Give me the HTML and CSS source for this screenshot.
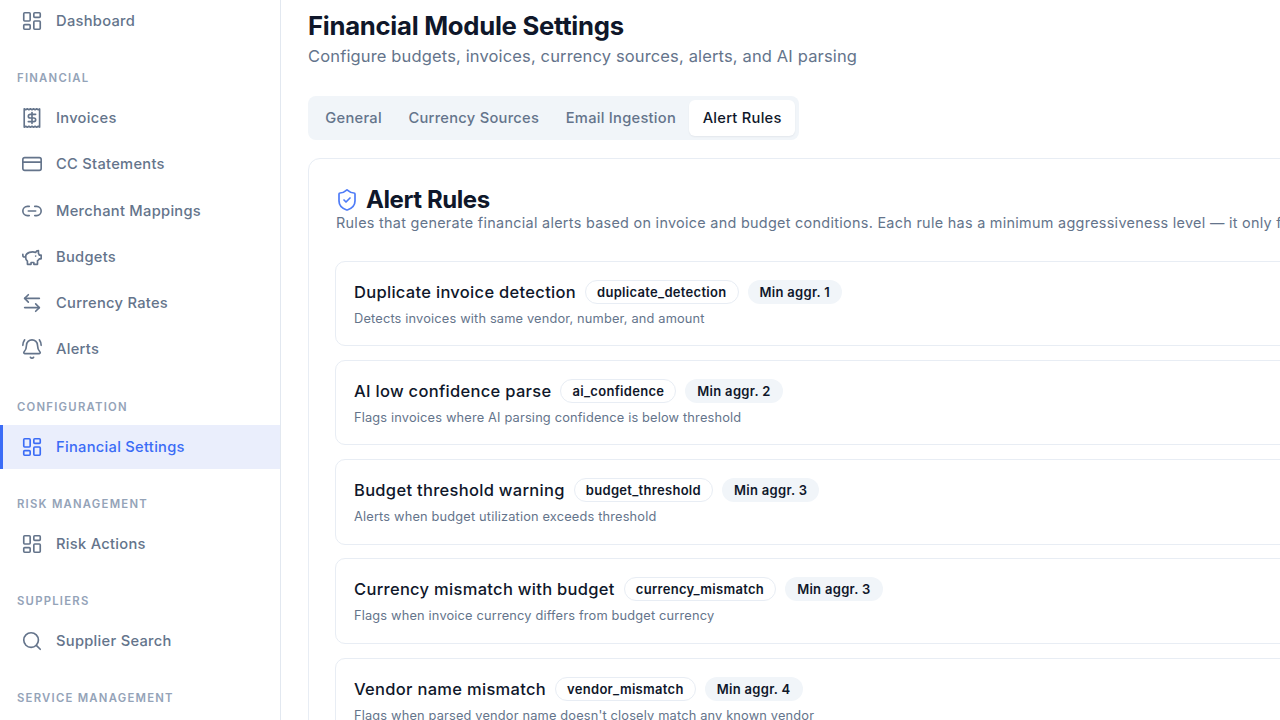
FILE: index.html
```html
<!DOCTYPE html>
<html lang="en">
<head>
<meta charset="utf-8">
<title>Financial Module Settings</title>
<link rel="stylesheet" href="styles.css">
</head>
<body>
<svg class="defs" width="0" height="0" aria-hidden="true">
  <symbol id="i-dash" viewBox="0 0 24 24"><rect x="3" y="3" width="7" height="9" rx="1"/><rect x="14" y="3" width="7" height="5" rx="1"/><rect x="14" y="12" width="7" height="9" rx="1"/><rect x="3" y="16" width="7" height="5" rx="1"/></symbol>
  <symbol id="i-invoice" viewBox="0 0 24 24"><path d="M3.5 2l1.7 1 1.7-1 1.7 1 1.7-1 1.7 1 1.7-1 1.7 1 1.7-1 1.7 1 1.5-1v20l-1.5-1-1.7 1-1.7-1-1.7 1-1.7-1-1.7 1-1.7-1-1.7 1-1.7-1-1.7 1V2z"/><path d="M16 8h-6a2 2 0 1 0 0 4h4a2 2 0 1 1 0 4H8"/><path d="M12 18v-12"/></symbol>
  <symbol id="i-card" viewBox="0 0 24 24"><rect x="2" y="5" width="20" height="14" rx="2"/><line x1="2" y1="10" x2="22" y2="10"/></symbol>
  <symbol id="i-link" viewBox="0 0 24 24"><path d="M9 17H7A5 5 0 0 1 7 7h2"/><path d="M15 7h2a5 5 0 1 1 0 10h-2"/><line x1="8" y1="12" x2="16" y2="12"/></symbol>
  <symbol id="i-piggy" viewBox="0 0 24 24"><path d="M19 5c-1.5 0-2.8 1.4-3 2-3.5-1.5-11-.3-11 5 0 1.8 0 3 2 4.5V20h4v-2h3v2h4v-4c1-.5 1.7-1 2-2h2v-4h-2c0-1-.5-1.5-1-2V5z"/><path d="M2 9v1c0 1.1.9 2 2 2h1"/><path d="M16 11h.01"/></symbol>
  <symbol id="i-swap" viewBox="0 0 24 24"><path d="M8 3 4 7l4 4"/><path d="M4 7h16"/><path d="m16 21 4-4-4-4"/><path d="M20 17H4"/></symbol>
  <symbol id="i-bell" viewBox="0 0 24 24"><path d="M10.268 21a2 2 0 0 0 3.464 0"/><path d="M22 8c0-2.3-.8-4.3-2-6"/><path d="M3.262 15.326A1 1 0 0 0 4 17h16a1 1 0 0 0 .74-1.673C19.41 13.956 18 12.499 18 8A6 6 0 0 0 6 8c0 4.499-1.411 5.956-2.738 7.326"/><path d="M4 2C2.8 3.7 2 5.7 2 8"/></symbol>
  <symbol id="i-search" viewBox="0 0 24 24"><circle cx="11" cy="11" r="8"/><path d="m21 21-4.3-4.3"/></symbol>
  <symbol id="i-shield" viewBox="0 0 24 24"><path d="M20 13c0 5-3.5 7.5-7.66 8.95a1 1 0 0 1-.67-.01C7.5 20.5 4 18 4 13V6a1 1 0 0 1 1-1c2 0 4.5-1.2 6.24-2.72a1.17 1.17 0 0 1 1.52 0C14.51 3.81 17 5 19 5a1 1 0 0 1 1 1z"/><path d="m9 12 2 2 4-4"/></symbol>
</svg>
<div class="app">
  <aside class="sidebar">
    <a class="nav-item"><svg class="icon"><use href="#i-dash"/></svg>Dashboard</a>
    <div class="group-label">FINANCIAL</div>
    <a class="nav-item"><svg class="icon"><use href="#i-invoice"/></svg>Invoices</a>
    <a class="nav-item"><svg class="icon"><use href="#i-card"/></svg>CC Statements</a>
    <a class="nav-item"><svg class="icon"><use href="#i-link"/></svg>Merchant Mappings</a>
    <a class="nav-item"><svg class="icon"><use href="#i-piggy"/></svg>Budgets</a>
    <a class="nav-item"><svg class="icon"><use href="#i-swap"/></svg>Currency Rates</a>
    <a class="nav-item"><svg class="icon"><use href="#i-bell"/></svg>Alerts</a>
    <div class="group-label">CONFIGURATION</div>
    <a class="nav-item active"><svg class="icon"><use href="#i-dash"/></svg>Financial Settings</a>
    <div class="group-label">RISK MANAGEMENT</div>
    <a class="nav-item"><svg class="icon"><use href="#i-dash"/></svg>Risk Actions</a>
    <div class="group-label">SUPPLIERS</div>
    <a class="nav-item"><svg class="icon"><use href="#i-search"/></svg>Supplier Search</a>
    <div class="group-label">SERVICE MANAGEMENT</div>
  </aside>
  <main class="main">
    <h1 class="title">Financial Module Settings</h1>
    <p class="subtitle">Configure budgets, invoices, currency sources, alerts, and AI parsing</p>
    <div class="tabs">
      <span class="tab">General</span>
      <span class="tab">Currency Sources</span>
      <span class="tab">Email Ingestion</span>
      <span class="tab selected">Alert Rules</span>
    </div>
    <section class="card">
      <h2 class="card-title"><svg class="shield"><use href="#i-shield"/></svg>Alert Rules</h2>
      <p class="card-desc">Rules that generate financial alerts based on invoice and budget conditions. Each rule has a minimum aggressiveness level — it only fires when the aggressiveness setting is high enough.</p>
      <div class="rule">
        <div class="rule-head"><span class="rule-name">Duplicate invoice detection</span><span class="code">duplicate_detection</span><span class="aggr">Min aggr. 1</span></div>
        <p class="rule-desc">Detects invoices with same vendor, number, and amount</p>
      </div>
      <div class="rule">
        <div class="rule-head"><span class="rule-name">AI low confidence parse</span><span class="code">ai_confidence</span><span class="aggr">Min aggr. 2</span></div>
        <p class="rule-desc">Flags invoices where AI parsing confidence is below threshold</p>
      </div>
      <div class="rule">
        <div class="rule-head"><span class="rule-name">Budget threshold warning</span><span class="code">budget_threshold</span><span class="aggr">Min aggr. 3</span></div>
        <p class="rule-desc">Alerts when budget utilization exceeds threshold</p>
      </div>
      <div class="rule">
        <div class="rule-head"><span class="rule-name">Currency mismatch with budget</span><span class="code">currency_mismatch</span><span class="aggr">Min aggr. 3</span></div>
        <p class="rule-desc">Flags when invoice currency differs from budget currency</p>
      </div>
      <div class="rule">
        <div class="rule-head"><span class="rule-name">Vendor name mismatch</span><span class="code">vendor_mismatch</span><span class="aggr">Min aggr. 4</span></div>
        <p class="rule-desc">Flags when parsed vendor name doesn't closely match any known vendor</p>
      </div>
    </section>
  </main>
</div>
</body>
</html>
```
FILE: styles.css
```css
* { box-sizing: border-box; }
html, body { margin: 0; height: 100%; overflow: hidden; background: #fff; }
body { font-family: Inter, "Liberation Sans", sans-serif; color: #0f172a; }
.defs { position: absolute; }
.app { display: flex; height: 720px; overflow: hidden; }

.sidebar { flex: 0 0 281px; height: 720px; overflow: hidden; border-right: 1px solid #e2e8f0; background: #fff; }
.nav-item { display: flex; align-items: center; gap: 13px; height: 44px; margin-bottom: 2.25px; padding-left: 21px; font-size: 14.7px; font-weight: 500; letter-spacing: 0.28px; color: #64748b; white-space: nowrap; }
.nav-item:first-child { margin-top: -1px; }
.nav-item.active { background: #eaeefc; color: #3b6cf6; box-shadow: inset 3px 0 0 #3b6cf6; }
.icon { width: 22px; height: 22px; flex: none; fill: none; stroke: currentColor; stroke-width: 1.8; stroke-linecap: round; stroke-linejoin: round; }
.group-label { padding-left: 17px; margin-top: 27.2px; height: 16px; line-height: 16px; margin-bottom: 10px; font-size: 11.3px; font-weight: 600; letter-spacing: 1.25px; color: #94a3b8; white-space: nowrap; }

.main { flex: 1; min-width: 0; overflow: hidden; padding: 10px 0 0 27px; }
.title { margin: 0; font-size: 25.7px; line-height: 32px; font-weight: 700; letter-spacing: -0.28px; color: #0f172a; white-space: nowrap; }
.subtitle { margin: 2px 0 0; font-size: 16.5px; line-height: 24px; letter-spacing: 0.145px; color: #64748b; white-space: nowrap; }
.tabs { display: inline-flex; align-items: center; margin-top: 28px; height: 44px; padding: 4px; background: #f1f5f9; border-radius: 8px; vertical-align: top; }
.tab { padding: 0 13.3px; height: 36px; line-height: 36px; font-size: 14.7px; font-weight: 500; letter-spacing: 0.26px; color: #64748b; border-radius: 6px; white-space: nowrap; }
.tab.selected { background: #fff; color: #0f172a; box-shadow: 0 1px 2px rgba(15, 23, 42, 0.06); }
.card { width: 1200px; margin-top: 18px; padding: 27px 27px 0; border: 1px solid #e8edf4; border-radius: 12px; background: #fff; }
.card-title { display: flex; align-items: center; gap: 7px; margin: 0; font-size: 24px; line-height: 28px; font-weight: 700; letter-spacing: -0.42px; color: #0f172a; }
.shield { width: 24px; height: 24px; margin-left: -1px; fill: none; stroke: #4f7cf7; stroke-width: 1.7; stroke-linecap: round; stroke-linejoin: round; }
.card-desc { margin: -2px 0 0; font-size: 14.4px; line-height: 22px; letter-spacing: 0.295px; color: #64748b; white-space: nowrap; }
.rule { height: 85.5px; margin-top: 13.75px; margin-left: -1px; padding: 17.2px 18px 0; border: 1px solid #e8edf4; border-radius: 10px; }
.card-desc + .rule { margin-top: 26.5px; }
.rule-head { display: flex; align-items: center; gap: 9px; height: 26px; }
.rule-name { font-size: 16.5px; font-weight: 500; letter-spacing: 0.3px; color: #0f172a; white-space: nowrap; }
.code, .aggr { display: inline-flex; align-items: center; height: 24px; padding: 0 11px; border-radius: 12px; font-size: 13px; font-weight: 600; letter-spacing: 0.3px; color: #0f172a; white-space: nowrap; }
.code { border: 1px solid #e8edf4; }
.aggr { background: #f1f5f9; padding: 0 12px; }
.rule-desc { margin: 5px 0 0; font-size: 12.8px; line-height: 18px; letter-spacing: 0.17px; color: #64748b; white-space: nowrap; }
```
